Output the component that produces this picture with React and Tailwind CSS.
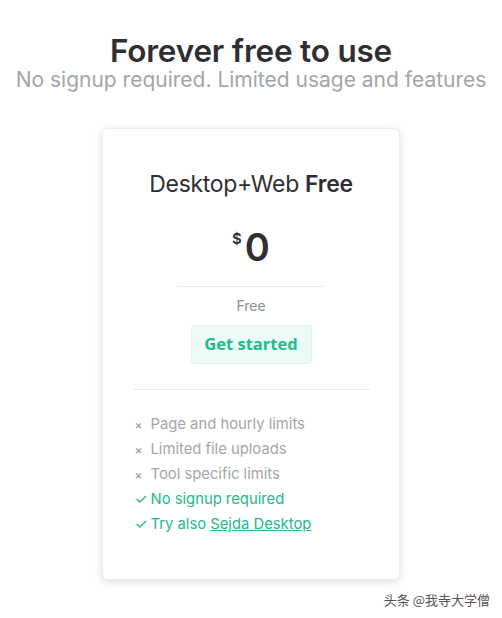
import React from "react";

const limits = ["Page and hourly limits", "Limited file uploads", "Tool specific limits"];

export default function App() {
  return (
    <div className="w-[502px] h-[618px] bg-white relative overflow-hidden font-['Inter',sans-serif]">
      <div className="pt-[33px] text-center">
        <h1 className="text-[31.5px] leading-[36px] font-semibold text-[#2f2f33] tracking-[-0.2px]">Forever free to use</h1>
        <p className="text-[21px] leading-[21px] text-[#a3a5ab]">No signup required. Limited usage and features</p>
      </div>

      <div className="mx-auto mt-[38px] w-[298px] h-[452px] bg-white rounded-[5px] shadow-[0_2px_8px_rgba(0,0,0,0.14)] border border-[#eeeeee] flex flex-col items-center">
        <h2 className="mt-[41px] text-[23px] leading-[28px] text-[#2f2f33] tracking-[-0.3px]">
          Desktop+Web <span className="font-semibold">Free</span>
        </h2>
        <div className="mt-[29px] flex items-start text-[#2f2f33]">
          <span className="text-[15px] font-semibold mt-[1px] mr-[3px]">$</span>
          <span className="text-[38px] leading-[40px] font-semibold">0</span>
        </div>
        <div className="mt-[19px] w-[148px] h-px bg-[#ececec]" />
        <div className="mt-[10px] text-[14px] leading-[18px] text-[#8a8d93]">Free</div>
        <button className="mt-[10px] w-[121px] h-[39px] rounded-[3px] bg-[#edfbf6] border border-[#dff3ec] text-[#1dbd8c] text-[16.5px] font-bold font-['Open_Sans',sans-serif]">
          Get started
        </button>
        <div className="mt-[25px] w-[237px] h-px bg-[#ececec]" />
        <ul className="mt-[22px] w-[237px] pl-[2px] text-[14.8px] leading-[25px]">
          {limits.map((t) => (
            <li key={t} className="flex text-[#a4a6ab]">
              <span className="w-[16px] text-[12px] text-[#8f9297]">×</span>
              {t}
            </li>
          ))}
          <li className="flex text-[#22b98c]">
            <span className="w-[16px]">✓</span>No signup required
          </li>
          <li className="flex text-[#22b98c]">
            <span className="w-[16px]">✓</span>Try also&nbsp;<a className="underline">Sejda Desktop</a>
          </li>
        </ul>
      </div>

      <div className="absolute right-[12px] top-[590px] text-[13px] text-[#555] font-['Noto_Sans_CJK_SC',sans-serif]">头条 @我寺大学僧</div>
    </div>
  );
}
